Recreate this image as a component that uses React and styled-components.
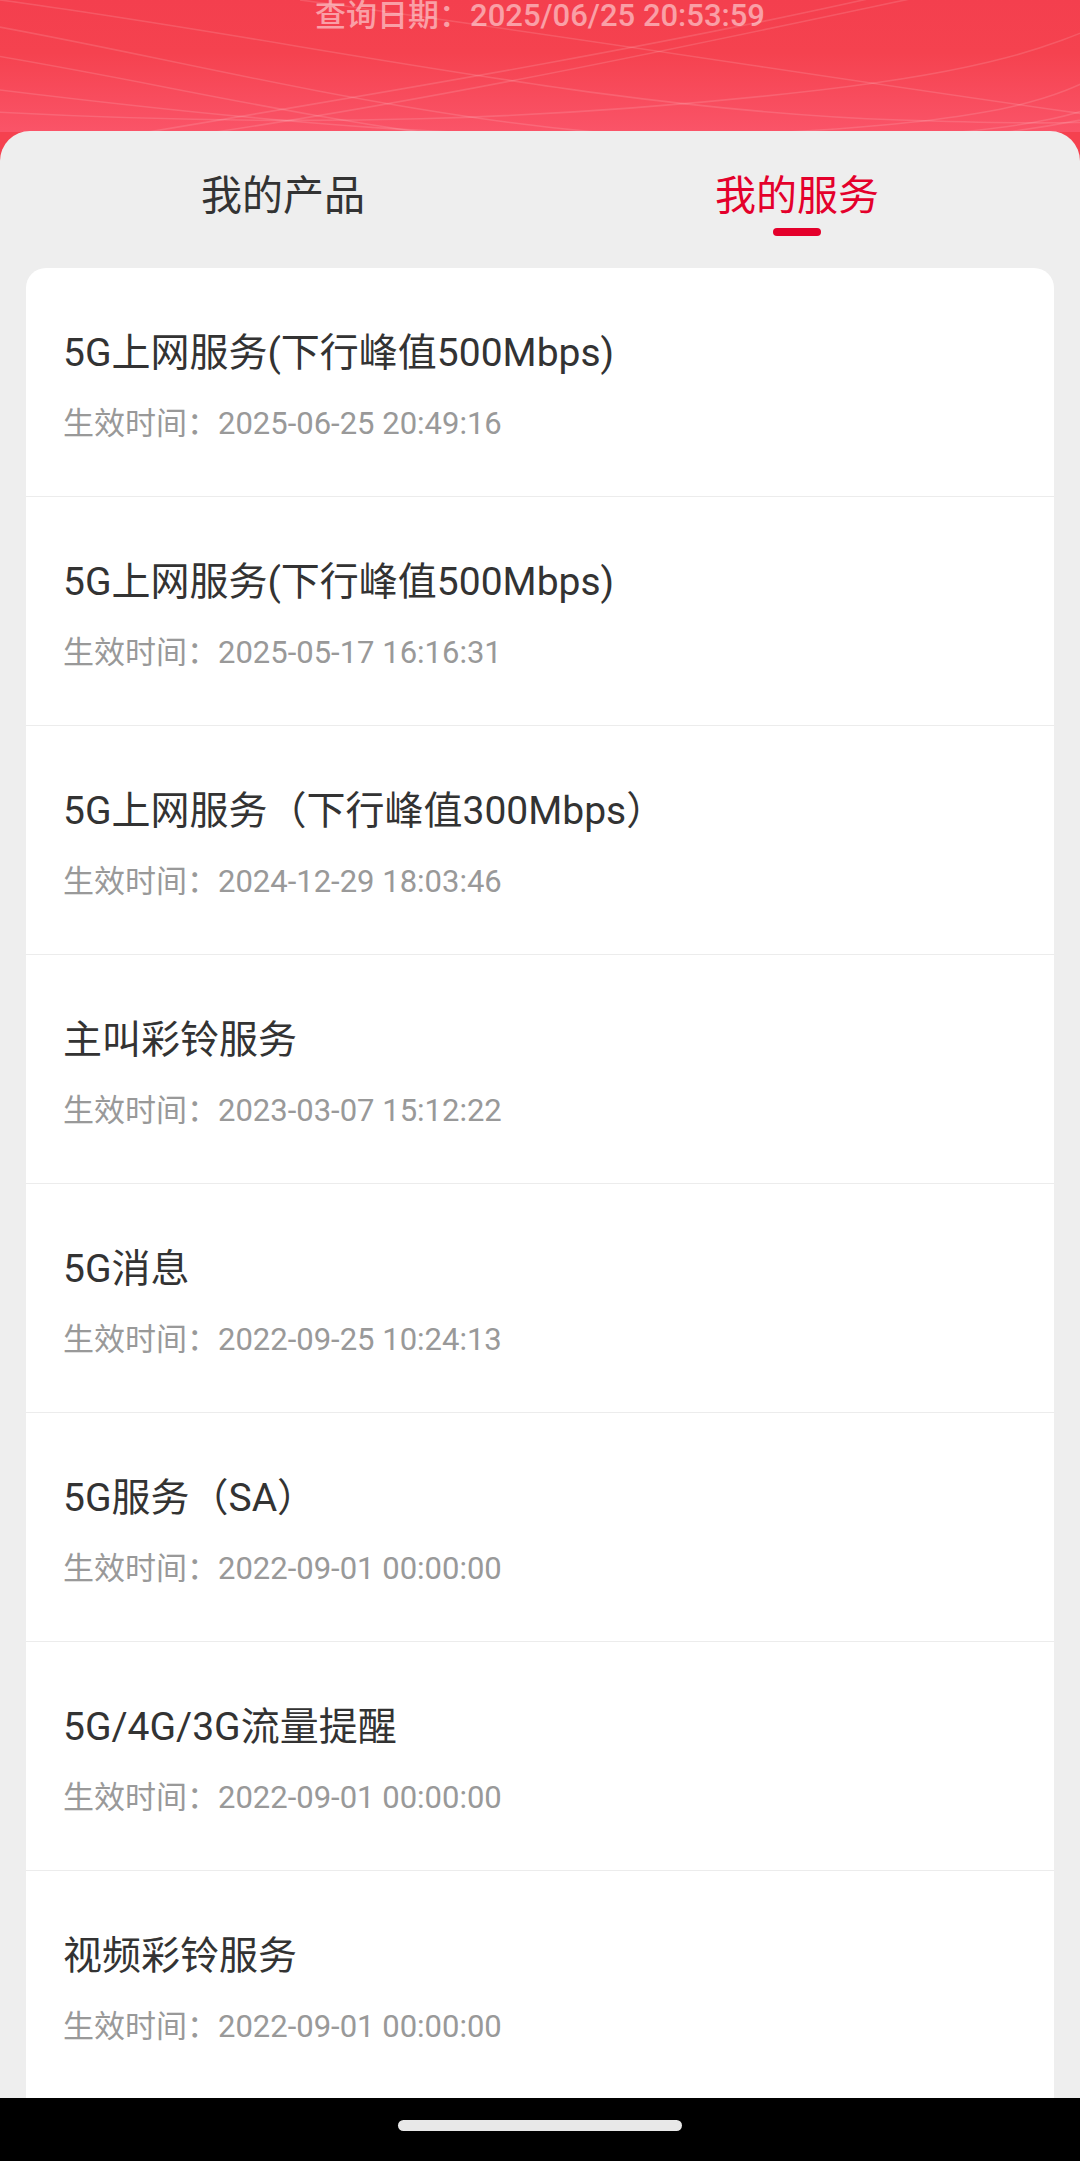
import React from "react";
import styled, { createGlobalStyle } from "styled-components";

const Global = createGlobalStyle`
  html, body { margin: 0; padding: 0; background: #eeeeee; }
  body { font-family: Roboto, "Noto Sans CJK SC", sans-serif; }
  * { box-sizing: border-box; }
`;

const Screen = styled.div`
  width: 1080px;
  height: 2161px;
  display: flex;
  flex-direction: column;
  overflow: hidden;
  background: #f5414f;
`;

const Content = styled.div`
  flex: 1;
  min-height: 0;
  display: flex;
  flex-direction: column;
  overflow: hidden;
  position: relative;
`;

const Header = styled.header`
  position: relative;
  height: 132px;
  flex-shrink: 0;
  background: linear-gradient(180deg, #f43f4e 0%, #f5424f 40%, #fa5468 100%);
  display: flex;
  justify-content: center;
  overflow: hidden;
`;

const Waves = styled.svg`
  position: absolute;
  inset: 0;
  width: 1080px;
  height: 140px;
`;

const QueryDate = styled.div`
  position: relative;
  padding-top: 1px;
  font-size: 31px;
  font-weight: 500;
  line-height: 30px;
  color: rgba(255, 255, 255, 0.5);
  font-family: Roboto, "Noto Sans CJK SC", sans-serif;
`;

const Sheet = styled.section`
  flex: 1;
  margin-top: -1px;
  background: #eeeeee;
  border-radius: 30px 30px 0 0;
  padding: 0 26px;
  display: flex;
  flex-direction: column;
  position: relative;
  z-index: 1;
`;

const Tabs = styled.div`
  display: grid;
  grid-template-columns: 1fr 1fr;
  padding-top: 32px;
  height: 137px;
`;

const Tab = styled.div`
  display: flex;
  flex-direction: column;
  align-items: center;
  font-family: "Noto Sans CJK SC", sans-serif;
  font-size: 41px;
  line-height: 58px;
  color: ${(p) => (p.$active ? "#e4002b" : "#333333")};
`;

const Indicator = styled.span`
  margin-top: 7px;
  width: 48px;
  height: 8px;
  border-radius: 4px;
  background: ${(p) => (p.$active ? "#e4002b" : "transparent")};
`;

const Card = styled.div`
  background: #ffffff;
  border-radius: 20px 20px 0 0;
  display: flex;
  flex-direction: column;
`;

const Row = styled.div`
  height: 229px;
  flex-shrink: 0;
  padding: 58px 30px 0 37px;
  border-bottom: 1px solid #ececec;
  display: flex;
  flex-direction: column;
`;

const Title = styled.div`
  font-size: 39px;
  line-height: 54px;
  color: #333333;
  font-family: Roboto, "Noto Sans CJK SC", sans-serif;
  white-space: nowrap;
`;

const Sub = styled.div`
  margin-top: 23px;
  font-size: 31px;
  line-height: 42px;
  color: #999999;
  font-family: Roboto, "Noto Sans CJK SC", sans-serif;
  white-space: nowrap;
`;

const NavBar = styled.div`
  height: 63px;
  flex-shrink: 0;
  background: #000000;
  display: flex;
  justify-content: center;
  padding-top: 22px;
`;

const Pill = styled.div`
  width: 284px;
  height: 11px;
  border-radius: 6px;
  background: #e8e8e8;
`;

const items = [
  ["5G上网服务(下行峰值500Mbps)", "2025-06-25 20:49:16"],
  ["5G上网服务(下行峰值500Mbps)", "2025-05-17 16:16:31"],
  ["5G上网服务（下行峰值300Mbps）", "2024-12-29 18:03:46"],
  ["主叫彩铃服务", "2023-03-07 15:12:22"],
  ["5G消息", "2022-09-25 10:24:13"],
  ["5G服务（SA）", "2022-09-01 00:00:00"],
  ["5G/4G/3G流量提醒", "2022-09-01 00:00:00"],
  ["视频彩铃服务", "2022-09-01 00:00:00"],
];

const wavePaths = [
  "M-40 20 C 200 60, 500 150, 820 140 S 1100 90, 1200 60",
  "M-40 50 C 220 90, 480 170, 800 150 S 1080 110, 1200 100",
  "M-40 85 C 240 120, 520 150, 820 130 S 1060 70, 1200 40",
  "M-40 110 C 300 130, 560 120, 820 90 S 1080 20, 1200 -10",
  "M100 140 C 400 90, 700 40, 950 -20",
  "M160 140 C 450 100, 760 30, 1000 -20",
  "M0 0 C 300 40, 600 110, 900 120 S 1100 110, 1200 120",
  "M300 0 C 600 40, 900 90, 1200 130",
];

export default function App() {
  return (
    <>
      <Global />
      <Screen>
        <Content>
          <Header>
            <Waves viewBox="0 0 1080 140" preserveAspectRatio="none">
              {wavePaths.map((d, i) => (
                <path
                  key={i}
                  d={d}
                  fill="none"
                  stroke="rgba(255,255,255,0.13)"
                  strokeWidth="1.6"
                />
              ))}
            </Waves>
            <QueryDate>查询日期：2025/06/25 20:53:59</QueryDate>
          </Header>
          <Sheet>
            <Tabs>
              <Tab>
                我的产品
                <Indicator />
              </Tab>
              <Tab $active>
                我的服务
                <Indicator $active />
              </Tab>
            </Tabs>
            <Card>
              {items.map(([t, d], i) => (
                <Row key={i}>
                  <Title>{t}</Title>
                  <Sub>生效时间：{d}</Sub>
                </Row>
              ))}
            </Card>
          </Sheet>
        </Content>
        <NavBar>
          <Pill />
        </NavBar>
      </Screen>
    </>
  );
}
